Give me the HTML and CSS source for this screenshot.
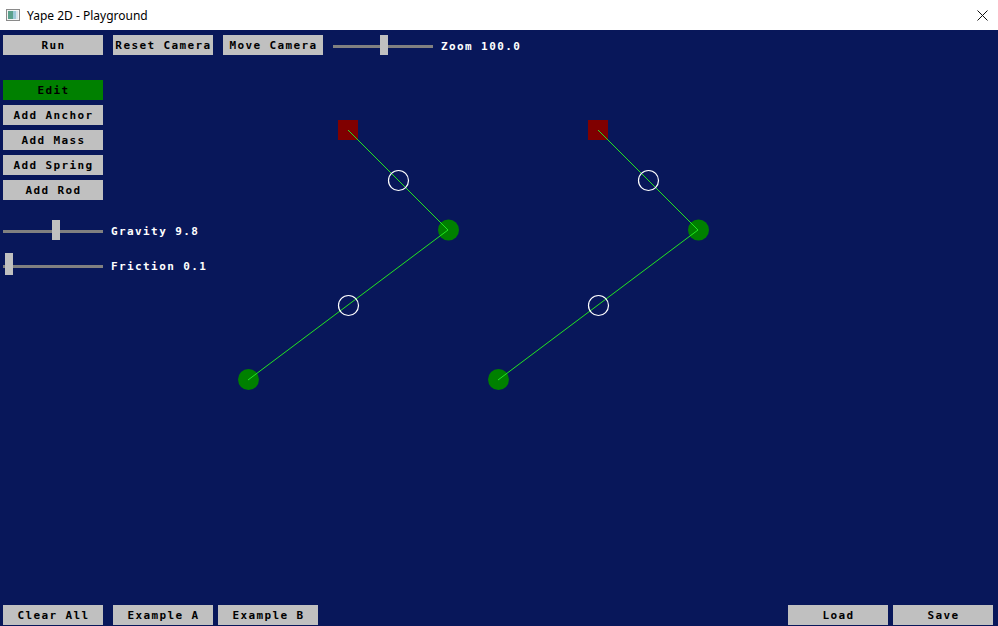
FILE: index.html
```
<!DOCTYPE html>
<html>
<head>
<meta charset="utf-8">
<title>Yape 2D - Playground</title>
<link rel="stylesheet" href="styles.css">
</head>
<body>
<div class="window">
  <div class="titlebar">
    <svg class="appicon" width="14" height="12" viewBox="0 0 14 12">
      <rect x="0.5" y="0.5" width="13" height="11" fill="#f4f4f4" stroke="#8a8a8a"/>
      <rect x="2" y="2" width="5" height="8" fill="#5aa08c"/>
      <rect x="7" y="2" width="3" height="8" fill="#9cc8d8"/>
      <rect x="10" y="2" width="2" height="8" fill="#d8e4ec"/>
    </svg>
    <span class="title">Yape 2D - Playground</span>
    <svg class="close" width="11" height="11" viewBox="0 0 11 11">
      <path d="M0.5 0.5 L10.5 10.5 M10.5 0.5 L0.5 10.5" stroke="#111" stroke-width="1"/>
    </svg>
  </div>
  <div class="app">
    <svg class="scene" width="998" height="596" viewBox="0 0 998 596">
      <g>
        <rect x="338" y="90" width="20" height="20" fill="#800000"/>
        <circle cx="448.5" cy="200" r="10.5" fill="#008000"/>
        <circle cx="248.5" cy="349.5" r="10.5" fill="#008000"/>
        <line x1="348" y1="100" x2="448" y2="200" stroke="#22e522" stroke-width="1"/>
        <line x1="448" y1="200" x2="248" y2="350" stroke="#22e522" stroke-width="1"/>
        <circle cx="398.5" cy="150.5" r="10" fill="none" stroke="#ffffff" stroke-width="1.2"/>
        <circle cx="348.5" cy="275.5" r="10" fill="none" stroke="#ffffff" stroke-width="1.2"/>
      </g>
      <g>
        <rect x="588" y="90" width="20" height="20" fill="#800000"/>
        <circle cx="698.5" cy="200" r="10.5" fill="#008000"/>
        <circle cx="498.5" cy="349.5" r="10.5" fill="#008000"/>
        <line x1="598" y1="100" x2="698" y2="200" stroke="#22e522" stroke-width="1"/>
        <line x1="698" y1="200" x2="498" y2="350" stroke="#22e522" stroke-width="1"/>
        <circle cx="648.5" cy="150.5" r="10" fill="none" stroke="#ffffff" stroke-width="1.2"/>
        <circle cx="598.5" cy="275.5" r="10" fill="none" stroke="#ffffff" stroke-width="1.2"/>
      </g>
    </svg>

    <div class="toolbar">
      <div class="btn">Run</div>
      <div class="btn">Reset Camera</div>
      <div class="btn">Move Camera</div>
      <div class="slider-row">
        <div class="slider"><div class="track"></div><div class="knob" style="left:47px"></div></div>
        <span class="label">Zoom 100.0</span>
      </div>
    </div>

    <div class="sidebar">
      <div class="tools">
        <div class="btn active">Edit</div>
        <div class="btn">Add Anchor</div>
        <div class="btn">Add Mass</div>
        <div class="btn">Add Spring</div>
        <div class="btn">Add Rod</div>
      </div>
      <div class="params">
        <div class="slider-row">
          <div class="slider"><div class="track"></div><div class="knob" style="left:49px"></div></div>
          <span class="label">Gravity 9.8</span>
        </div>
        <div class="slider-row">
          <div class="slider"><div class="track"></div><div class="knob knob-low" style="left:2px"></div></div>
          <span class="label">Friction 0.1</span>
        </div>
      </div>
    </div>

    <div class="bottombar">
      <div class="group">
        <div class="btn">Clear All</div>
        <div class="btn gap-l">Example A</div>
        <div class="btn">Example B</div>
      </div>
      <div class="group right">
        <div class="btn">Load</div>
        <div class="btn">Save</div>
      </div>
    </div>
  </div>
</div>
</body>
</html>
```
FILE: styles.css
```
* { box-sizing: border-box; }
html, body { margin: 0; padding: 0; }
body { width: 998px; height: 626px; overflow: hidden; background: #ffffff; }

.window { display: flex; flex-direction: column; width: 998px; height: 626px; }

.titlebar {
  height: 30px;
  flex: none;
  display: flex;
  align-items: center;
  background: #ffffff;
  padding-left: 6px;
  font-family: "Noto Sans", "Open Sans", sans-serif;
  font-size: 12px;
  color: #000000;
}
.appicon { flex: none; margin-top: -1px; }
.title { margin-left: 7px; }
.close { margin-left: auto; margin-right: 10px; }

.app {
  position: relative;
  flex: 1;
  background: #08175a;
  display: flex;
  flex-direction: column;
  font-family: "DejaVu Sans Mono", "Liberation Mono", monospace;
  font-weight: bold;
  font-size: 11px;
  letter-spacing: 1.4px;
}

.scene { position: absolute; left: 0; top: 0; pointer-events: none; }

.btn {
  position: relative;
  width: 100px;
  height: 20px;
  background: #c0c0c0;
  color: #000000;
  display: flex;
  align-items: center;
  justify-content: center;
  white-space: nowrap;
  padding-left: 1px;
  line-height: 1;
}
.btn.active { background: #008000; }

.toolbar {
  position: relative;
  display: flex;
  gap: 10px;
  padding: 5px 0 0 3px;
}

.slider-row {
  display: flex;
  align-items: center;
  gap: 8px;
  height: 20px;
}
.slider { position: relative; width: 100px; height: 20px; flex: none; }
.track {
  position: absolute;
  left: 0; right: 0;
  top: 10px;
  height: 3px;
  background: #808080;
}
.knob {
  position: absolute;
  top: 0;
  width: 8px;
  height: 20px;
  background: #c0c0c0;
}
.knob-low { top: -2px; height: 22px; }
.label { color: #ffffff; padding-top: 3px; white-space: nowrap; line-height: 1; }

.sidebar {
  position: relative;
  display: flex;
  flex-direction: column;
  padding-left: 3px;
  margin-top: 25px;
}
.tools { display: flex; flex-direction: column; gap: 5px; }
.params { display: flex; flex-direction: column; gap: 15px; margin-top: 20px; }

.bottombar {
  position: relative;
  margin-top: auto;
  display: flex;
  justify-content: space-between;
  padding: 0 5px 1px 3px;
}
.group { display: flex; gap: 5px; }
.group .gap-l { margin-left: 5px; }
```
